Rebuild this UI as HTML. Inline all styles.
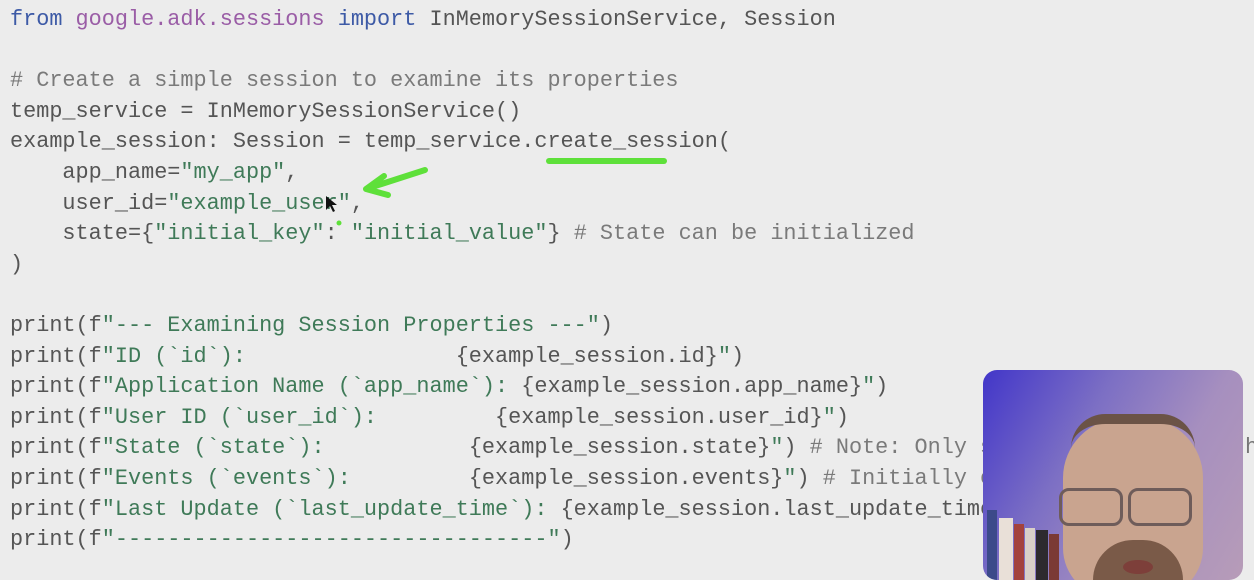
<!DOCTYPE html>
<html><head><meta charset="utf-8"><style>
html,body{margin:0;padding:0;width:1254px;height:570px;overflow:hidden;background:#ececec;}
.code{position:absolute;left:10px;top:5px;margin:0;font-family:"Liberation Mono",monospace;font-size:21.85px;line-height:30.6px;color:#555;white-space:pre;}
.k{color:#3d5aa6}.m{color:#9a5da6}.c{color:#7a7a7a}.s{color:#3f7a58}
.cam{position:absolute;left:983px;top:370px;width:260px;height:210px;border-radius:14px;overflow:hidden;background:linear-gradient(120deg,#4236c9 0%,#7c6fc4 35%,#a68fbf 65%,#b79cb8 100%);}
</style></head><body>
<pre class="code"><span class="k">from</span> <span class="m">google.adk.sessions</span> <span class="k">import</span> InMemorySessionService, Session

<span class="c"># Create a simple session to examine its properties</span>
temp_service = InMemorySessionService()
example_session: Session = temp_service.create_session(
    app_name=<span class="s">"my_app"</span>,
    user_id=<span class="s">"example_user"</span>,
    state={<span class="s">"initial_key"</span>: <span class="s">"initial_value"</span>} <span class="c"># State can be initialized</span>
)

print(f<span class="s">"--- Examining Session Properties ---"</span>)
print(f<span class="s">"ID (`id`):                </span>{example_session.id}<span class="s">"</span>)
print(f<span class="s">"Application Name (`app_name`): </span>{example_session.app_name}<span class="s">"</span>)
print(f<span class="s">"User ID (`user_id`):         </span>{example_session.user_id}<span class="s">"</span>)
print(f<span class="s">"State (`state`):           </span>{example_session.state}<span class="s">"</span>) <span class="c"># Note: Only shows</span>
print(f<span class="s">"Events (`events`):         </span>{example_session.events}<span class="s">"</span>) <span class="c"># Initially empty</span>
print(f<span class="s">"Last Update (`last_update_time`): </span>{example_session.last_update_time}<span class="s">"</span>)
print(f<span class="s">"---------------------------------"</span>)</pre>
<svg style="position:absolute;left:0;top:0" width="1254" height="570">
<line x1="549" y1="161" x2="664" y2="161" stroke="#5ee03a" stroke-width="6" stroke-linecap="round"/>
<path d="M425 170 L366 189 M366 189 L384 176 M366 189 L388 195" stroke="#5ee03a" stroke-width="6" stroke-linecap="round" fill="none"/>
<circle cx="339" cy="223" r="2.5" fill="#5ee03a"/>
<path d="M326 196 L326 210 L330 206 L333 212 L335 211 L332 205 L337 205 Z" fill="#111"/>
</svg>
<div class="cam">
 <div style="position:absolute;left:0;top:120px;width:80px;height:90px;">
  <div style="position:absolute;left:4px;top:20px;width:10px;height:70px;background:#3c4a8a"></div>
  <div style="position:absolute;left:16px;top:28px;width:14px;height:62px;background:#e9e0d8"></div>
  <div style="position:absolute;left:31px;top:34px;width:10px;height:56px;background:#a3423d"></div>
  <div style="position:absolute;left:42px;top:38px;width:10px;height:52px;background:#d9d0c8"></div>
  <div style="position:absolute;left:53px;top:40px;width:12px;height:50px;background:#2d2a2e"></div>
  <div style="position:absolute;left:66px;top:44px;width:10px;height:46px;background:#7b3a35"></div>
 </div>
 <div style="position:absolute;left:80px;top:48px;width:140px;height:180px;border-radius:60px 60px 50px 50px;background:#c9a48f"></div>
 <div style="position:absolute;left:88px;top:44px;width:124px;height:40px;border-radius:60px 60px 10px 10px;border-top:10px solid #6b5346;box-sizing:border-box"></div>
 <div style="position:absolute;left:76px;top:118px;width:58px;height:32px;border:3px solid #6e5c5a;border-radius:10px"></div>
 <div style="position:absolute;left:145px;top:118px;width:58px;height:32px;border:3px solid #6e5c5a;border-radius:10px"></div>
 <div style="position:absolute;left:110px;top:170px;width:90px;height:50px;border-radius:40px 40px 0 0;background:#7a5a48"></div>
 <div style="position:absolute;left:140px;top:190px;width:30px;height:14px;border-radius:50%;background:#7d3f3a"></div>
</div>
<div style="position:absolute;left:1245px;top:435px;font-family:'Liberation Mono',monospace;font-size:21.85px;color:#777">h</div>
</body></html>
